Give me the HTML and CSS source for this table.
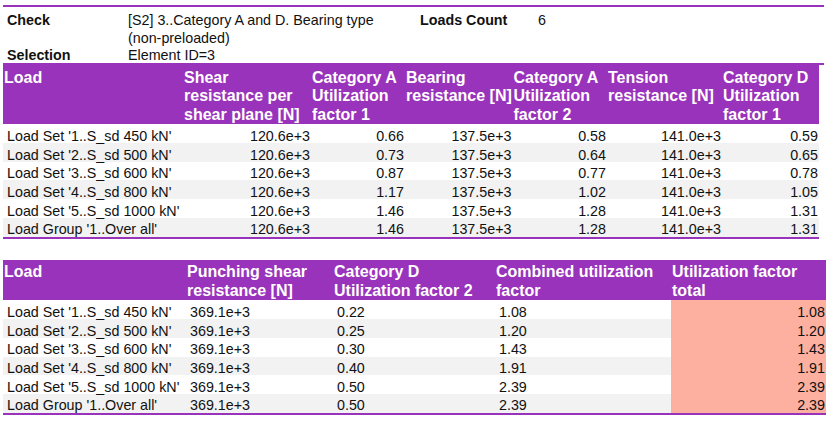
FILE: index.html
```html
<!DOCTYPE html>
<html>
<head>
<meta charset="utf-8">
<link rel="stylesheet" href="styles.css">
</head>
<body>
<div class="report">
  <table class="info">
    <colgroup><col class="i1"><col class="i2"><col class="i3"><col class="i4"></colgroup>
    <tr class="first">
      <th>Check</th>
      <td>[S2] 3..Category A and D. Bearing type <span class="nb">(non-preloaded)</span></td>
      <th>Loads Count</th>
      <td>6</td>
    </tr>
    <tr class="second">
      <th>Selection</th>
      <td>Element ID=3</td>
      <td></td>
      <td></td>
    </tr>
  </table>

  <table class="grid t1">
    <colgroup>
      <col class="a1"><col class="a2"><col class="a3"><col class="a4"><col class="a5"><col class="a6"><col class="a7">
    </colgroup>
    <thead>
      <tr>
        <th>Load</th>
        <th>Shear<br>resistance per<br>shear plane [N]</th>
        <th>Category A<br>Utilization<br>factor 1</th>
        <th>Bearing<br>resistance [N]</th>
        <th>Category A<br>Utilization<br>factor 2</th>
        <th>Tension<br>resistance [N]</th>
        <th>Category D<br>Utilization<br>factor 1</th>
      </tr>
    </thead>
    <tbody>
      <tr><td class="name">Load Set '1..S_sd 450 kN'</td><td>120.6e+3</td><td>0.66</td><td>137.5e+3</td><td>0.58</td><td>141.0e+3</td><td>0.59</td></tr>
      <tr><td class="name">Load Set '2..S_sd 500 kN'</td><td>120.6e+3</td><td>0.73</td><td>137.5e+3</td><td>0.64</td><td>141.0e+3</td><td>0.65</td></tr>
      <tr><td class="name">Load Set '3..S_sd 600 kN'</td><td>120.6e+3</td><td>0.87</td><td>137.5e+3</td><td>0.77</td><td>141.0e+3</td><td>0.78</td></tr>
      <tr><td class="name">Load Set '4..S_sd 800 kN'</td><td>120.6e+3</td><td>1.17</td><td>137.5e+3</td><td>1.02</td><td>141.0e+3</td><td>1.05</td></tr>
      <tr><td class="name">Load Set '5..S_sd 1000 kN'</td><td>120.6e+3</td><td>1.46</td><td>137.5e+3</td><td>1.28</td><td>141.0e+3</td><td>1.31</td></tr>
      <tr><td class="name">Load Group '1..Over all'</td><td>120.6e+3</td><td>1.46</td><td>137.5e+3</td><td>1.28</td><td>141.0e+3</td><td>1.31</td></tr>
    </tbody>
  </table>

  <table class="grid t2">
    <colgroup>
      <col class="b1"><col class="b2"><col class="b3"><col class="b4"><col class="b5">
    </colgroup>
    <thead>
      <tr>
        <th>Load</th>
        <th>Punching shear<br>resistance [N]</th>
        <th>Category D<br>Utilization factor 2</th>
        <th>Combined utilization<br>factor</th>
        <th>Utilization factor<br>total</th>
      </tr>
    </thead>
    <tbody>
      <tr><td class="name">Load Set '1..S_sd 450 kN'</td><td>369.1e+3</td><td>0.22</td><td>1.08</td><td class="total">1.08</td></tr>
      <tr><td class="name">Load Set '2..S_sd 500 kN'</td><td>369.1e+3</td><td>0.25</td><td>1.20</td><td class="total">1.20</td></tr>
      <tr><td class="name">Load Set '3..S_sd 600 kN'</td><td>369.1e+3</td><td>0.30</td><td>1.43</td><td class="total">1.43</td></tr>
      <tr><td class="name">Load Set '4..S_sd 800 kN'</td><td>369.1e+3</td><td>0.40</td><td>1.91</td><td class="total">1.91</td></tr>
      <tr><td class="name">Load Set '5..S_sd 1000 kN'</td><td>369.1e+3</td><td>0.50</td><td>2.39</td><td class="total">2.39</td></tr>
      <tr><td class="name">Load Group '1..Over all'</td><td>369.1e+3</td><td>0.50</td><td>2.39</td><td class="total">2.39</td></tr>
    </tbody>
  </table>
</div>
</body>
</html>
```

FILE: styles.css
```css
html, body {
  background: #ffffff;
}
body {
  margin: 5px 0 0 3px;
  font-family: "Liberation Sans", Arial, sans-serif;
  font-size: 14.3px;
  color: #111111;
}
table {
  border-collapse: separate;
  border-spacing: 0;
  table-layout: fixed;
}

/* info block */
.info {
  width: 821px;
  border-top: 2px solid #9933bb;
  border-bottom: 2px solid #9933bb;
}
.info .i1 { width: 121px; }
.info .i2 { width: 292px; }
.info .i3 { width: 118px; }
.info .i4 { width: 290px; }
.info th,
.info td {
  padding: 0 0 0 4px;
  vertical-align: top;
  text-align: left;
}
.info th {
  font-weight: bold;
}
.info .first > th,
.info .first > td {
  padding-top: 5px;
  line-height: 17.5px;
}
.info .second > th,
.info .second > td {
  line-height: 16px;
}
.nb {
  white-space: nowrap;
}

/* data grids */
.grid {
  border-bottom: 2px solid #9933bb;
}
.grid thead th {
  background: #9933bb;
  color: #ffffff;
  font-weight: bold;
  font-size: 16px;
  line-height: 18.4px;
  text-align: left;
  vertical-align: top;
  white-space: nowrap;
  padding: 3.7px 1px 0.4px 1px;
}
.grid td {
  padding: 4.5px 1px 0 4px;
  line-height: 14.2px;
  white-space: nowrap;
  vertical-align: top;
}
.grid tbody tr:nth-child(even) td {
  background: #f2f2f2;
}

.t1 { width: 816px; }
.t1 .a1 { width: 180px; }
.t1 .a2 { width: 128px; }
.t1 .a3 { width: 94px; }
.t1 .a4 { width: 107.5px; }
.t1 .a5 { width: 94.5px; }
.t1 .a6 { width: 115px; }
.t1 .a7 { width: 97px; }
.t1 td {
  text-align: right;
}
.t1 td.name {
  text-align: left;
}

.t2 {
  width: 823px;
  margin-top: 21px;
}
.t2 .b1 { width: 183px; }
.t2 .b2 { width: 147px; }
.t2 .b3 { width: 162px; }
.t2 .b4 { width: 176px; }
.t2 .b5 { width: 155px; }
.t2 td {
  text-align: left;
}
.grid tbody tr td.total,
.grid tbody tr:nth-child(even) td.total {
  background: #fdb0a0;
  text-align: right;
}
```
